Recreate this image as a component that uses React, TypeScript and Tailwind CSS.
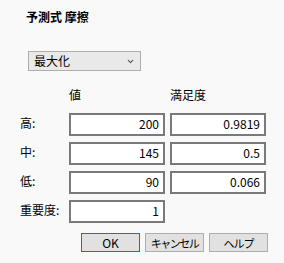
import { ChevronDown } from "lucide-react";

const font = { fontFamily: '"Noto Sans CJK JP", "Noto Sans", sans-serif' };

const rows = [
  { label: "高:", value: "200", desire: "0.9819" },
  { label: "中:", value: "145", desire: "0.5" },
  { label: "低:", value: "90", desire: "0.066" },
];

const Box = ({ text }: { text: string }) => (
  <div className="h-[23px] border-2 border-[#7a7a7a] bg-white text-right pr-[4px] text-[12px] leading-[18px] text-black">
    {text}
  </div>
);

export default function App() {
  return (
    <div
      className="w-[284px] h-[263px] bg-[#f9f9f9] text-black text-[12px] flex flex-col"
      style={font}
    >
      <div className="pl-[26px] pt-[9px] font-bold text-[12px] leading-[16px]">予測式 摩擦</div>

      <div className="ml-[28px] mt-[26px] w-[113px] h-[20px] border border-[#adadad] bg-[#e9e9e9] flex items-center justify-between pl-[5px] pr-[5px]">
        <span className="text-[12px] leading-[16px]">最大化</span>
        <ChevronDown className="w-[9px] h-[9px] text-[#555]" strokeWidth={3} />
      </div>

      <div className="ml-[20px] mt-[16px] grid grid-cols-[44px_96px_96px] gap-x-[5px] gap-y-[6px]">
        <div />
        <div className="text-[12px] leading-[16px] mb-[4px]">値</div>
        <div className="text-[12px] leading-[16px] mb-[4px]">満足度</div>
        {rows.map((r) => (
          <>
            <div key={r.label + "l"} className="text-[12px] leading-[16px] pt-[2px]">{r.label}</div>
            <Box key={r.label + "v"} text={r.value} />
            <Box key={r.label + "d"} text={r.desire} />
          </>
        ))}
        <div className="text-[12px] leading-[16px] pt-[2px] whitespace-nowrap">重要度:</div>
        <Box text="1" />
        <div />
      </div>

      <div className="mt-[10px] ml-[81px] flex gap-[5px]">
        <button className="w-[59px] h-[19px] border border-[#0078d7] bg-[#e1e1e1] text-[12px] leading-[16px]">OK</button>
        <button className="w-[59px] h-[19px] border border-[#adadad] bg-[#e1e1e1] text-[11px] leading-[16px] whitespace-nowrap tracking-[-1.5px]">キャンセル</button>
        <button className="w-[59px] h-[19px] border border-[#adadad] bg-[#e1e1e1] text-[11px] leading-[16px] whitespace-nowrap tracking-[-1px]">ヘルプ</button>
      </div>
    </div>
  );
}
